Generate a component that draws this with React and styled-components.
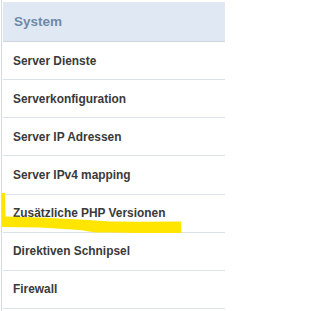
import React from "react";
import styled, { createGlobalStyle } from "styled-components";

const Global = createGlobalStyle`
  html, body { margin: 0; padding: 0; background: #ffffff; }
  body { font-family: "Liberation Sans", Arial, sans-serif; }
`;

const Page = styled.div`
  position: relative;
  width: 225px;
  height: 311px;
  overflow: hidden;
  background: #ffffff;
`;

const Panel = styled.nav`
  margin-left: 1px;
  padding: 2px 0 0 1px;
  border-left: 1px solid #d3dbe5;
  height: 309px;
`;

const Header = styled.div`
  height: 39px;
  display: flex;
  align-items: center;
  padding-left: 11px;
  background: #dfe8f3;
  border-bottom: 1px solid #cfd5dc;
  color: #6f8aa7;
  font-weight: bold;
  font-size: 13.5px;
`;

const List = styled.ul`
  list-style: none;
  margin: 0;
  padding: 0;
`;

const Item = styled.li`
  height: 37.15px;
  display: flex;
  align-items: center;
  padding-left: 10px;
  border-bottom: 1px solid #dbe2ea;
  color: #3a3a3a;
  font-weight: bold;
  font-size: 11.9px;
  white-space: nowrap;
`;

const Marker = styled.svg`
  position: absolute;
  left: 0;
  top: 0;
  pointer-events: none;
`;

const items = [
  "Server Dienste",
  "Serverkonfiguration",
  "Server IP Adressen",
  "Server IPv4 mapping",
  "Zusätzliche PHP Versionen",
  "Direktiven Schnipsel",
  "Firewall",
];

export default function App() {
  return (
    <>
      <Global />
      <Page>
        <Panel>
          <Header>System</Header>
          <List>
            {items.map((t) => (
              <Item key={t}>{t}</Item>
            ))}
          </List>
        </Panel>
        <Marker width="225" height="311" viewBox="0 0 225 311">
          <path
            d="M1.5 193 L5 193 L5.5 216.5 L40 217.5 L80 219.5 L110 221.5 L140 221.8 L181 221.5 L181.5 233 L140 233 L110 232.5 L95 232.6 L80 230 L40 227.5 L2 227 Z"
            fill="#ffe500"
          />
        </Marker>
      </Page>
    </>
  );
}
